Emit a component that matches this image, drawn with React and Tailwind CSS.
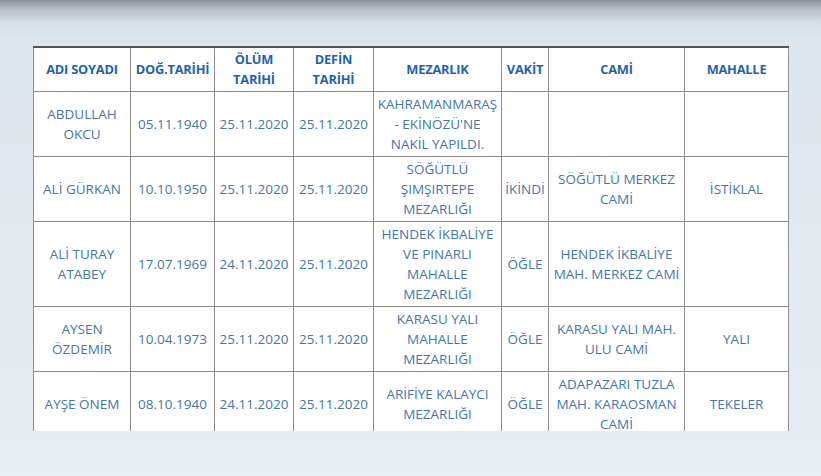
import React from "react";

const cols = [97, 84, 79, 80, 128, 47, 136, 104];

const header = ["ADI SOYADI", "DOĞ.TARİHİ", "ÖLÜM TARİHİ", "DEFİN TARİHİ", "MEZARLIK", "VAKİT", "CAMİ", "MAHALLE"];

const rows = [
  { h: 65, c: ["ABDULLAH OKCU", "05.11.1940", "25.11.2020", "25.11.2020", "KAHRAMANMARAŞ - EKİNÖZÜ'NE NAKİL YAPILDI.", "", "", ""] },
  { h: 65, c: ["ALİ GÜRKAN", "10.10.1950", "25.11.2020", "25.11.2020", "SÖĞÜTLÜ ŞIMŞIRTEPE MEZARLIĞI", "İKİNDİ", "SÖĞÜTLÜ MERKEZ CAMİ", "İSTİKLAL"] },
  { h: 85, c: ["ALİ TURAY ATABEY", "17.07.1969", "24.11.2020", "25.11.2020", "HENDEK İKBALİYE VE PINARLI MAHALLE MEZARLIĞI", "ÖĞLE", "HENDEK İKBALİYE MAH. MERKEZ CAMİ", ""] },
  { h: 65, c: ["AYSEN ÖZDEMİR", "10.04.1973", "25.11.2020", "25.11.2020", "KARASU YALI MAHALLE MEZARLIĞI", "ÖĞLE", "KARASU YALI MAH. ULU CAMİ", "YALI"] },
  { h: 65, c: ["AYŞE ÖNEM", "08.10.1940", "24.11.2020", "25.11.2020", "ARİFİYE KALAYCI MEZARLIĞI", "ÖĞLE", "ADAPAZARI TUZLA MAH. KARAOSMAN CAMİ", "TEKELER"] },
];

export default function App() {
  return (
    <div
      className="w-[821px] h-[476px] overflow-hidden bg-[linear-gradient(180deg,#8e9297_0px,#b9c0c7_10px,#d6dee6_22px,#dfe7ee_40px,#e6ecf1_430px,#e9eef2_476px)]"
      style={{ fontFamily: '"Open Sans", "Noto Sans", sans-serif' }}
    >
      <div className="pt-[46px] pl-[33px]">
        <div className="w-[756px] h-[385px] overflow-hidden bg-white">
          <table className="border-collapse table-fixed w-[755px] text-[13.5px] leading-[20px]">
            <colgroup>
              {cols.map((w, i) => (
                <col key={i} style={{ width: w }} />
              ))}
            </colgroup>
            <thead>
              <tr className="h-[44px]">
                {header.map((t, i) => (
                  <th
                    key={i}
                    className="border border-[#8d8d8d] border-t-[#555] border-t-2 text-[#1f63ad] text-[12.8px] font-bold text-center align-middle px-[2px] tracking-[-0.2px]"
                  >
                    {t}
                  </th>
                ))}
              </tr>
            </thead>
            <tbody>
              {rows.map((r, ri) => (
                <tr key={ri} style={{ height: r.h }}>
                  {r.c.map((t, i) => (
                    <td
                      key={i}
                      className="border border-[#8d8d8d] text-[#4577a6] text-center align-middle px-[2px] py-[2px]"
                    >
                      {t}
                    </td>
                  ))}
                </tr>
              ))}
            </tbody>
          </table>
        </div>
      </div>
    </div>
  );
}
